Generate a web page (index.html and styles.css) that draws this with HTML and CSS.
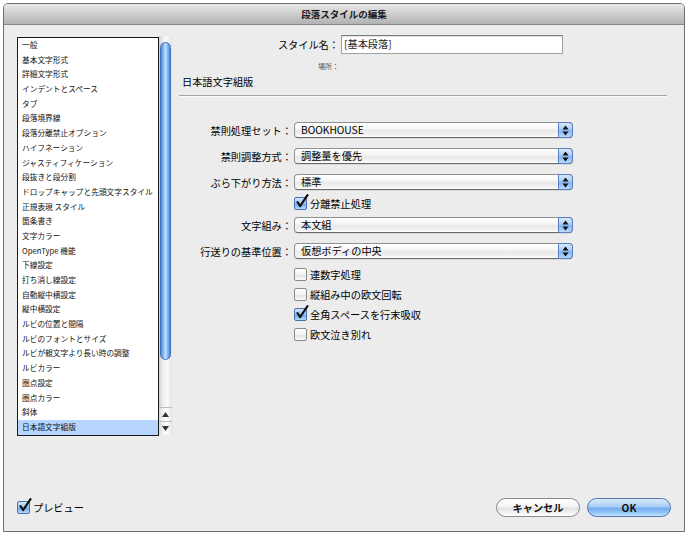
FILE: index.html
```html
<!DOCTYPE html>
<html lang="ja">
<head>
<meta charset="utf-8">
<title>段落スタイルの編集</title>
<link rel="stylesheet" href="styles.css">
</head>
<body>
<div class="window">
  <div class="titlebar">段落スタイルの編集</div>
  <div class="main">
    <div class="sidebar">
      <ul class="list">
        <li>一般</li>
        <li>基本文字形式</li>
        <li>詳細文字形式</li>
        <li>インデントとスペース</li>
        <li>タブ</li>
        <li>段落境界線</li>
        <li>段落分離禁止オプション</li>
        <li>ハイフネーション</li>
        <li>ジャスティフィケーション</li>
        <li>段抜きと段分割</li>
        <li>ドロップキャップと先頭文字スタイル</li>
        <li>正規表現 スタイル</li>
        <li>箇条書き</li>
        <li>文字カラー</li>
        <li>OpenType 機能</li>
        <li>下線設定</li>
        <li>打ち消し線設定</li>
        <li>自動縦中横設定</li>
        <li>縦中横設定</li>
        <li>ルビの位置と間隔</li>
        <li>ルビのフォントとサイズ</li>
        <li>ルビが親文字より長い時の調整</li>
        <li>ルビカラー</li>
        <li>圏点設定</li>
        <li>圏点カラー</li>
        <li>斜体</li>
        <li class="selected">日本語文字組版</li>
      </ul>
      <div class="scrollbar">
        <div class="track"><div class="thumb"></div></div>
        <div class="arrow"><svg width="7" height="5" viewBox="0 0 7 5"><polygon points="3.5,0 7,5 0,5" fill="#333"/></svg></div>
        <div class="arrow"><svg width="7" height="5" viewBox="0 0 7 5"><polygon points="0,0 7,0 3.5,5" fill="#333"/></svg></div>
      </div>
    </div>
    <div class="panel">
      <div class="name-row">
        <span class="name-label">スタイル名：</span>
        <div class="input">[基本段落]</div>
      </div>
      <div class="loc-row">場所：</div>
      <h2 class="heading">日本語文字組版</h2>
      <div class="sep"></div>
      <div class="form">
        <div class="row row-select">
          <span class="label">禁則処理セット：</span>
          <div class="select"><span class="value">BOOKHOUSE</span><span class="stepper"><svg width="7" height="11" viewBox="0 0 7 11"><polygon points="3.5,0.5 6.5,4.5 0.5,4.5" fill="#111"/><polygon points="0.5,6.5 6.5,6.5 3.5,10.5" fill="#111"/></svg></span></div>
        </div>
        <div class="row row-select">
          <span class="label">禁則調整方式：</span>
          <div class="select"><span class="value">調整量を優先</span><span class="stepper"><svg width="7" height="11" viewBox="0 0 7 11"><polygon points="3.5,0.5 6.5,4.5 0.5,4.5" fill="#111"/><polygon points="0.5,6.5 6.5,6.5 3.5,10.5" fill="#111"/></svg></span></div>
        </div>
        <div class="row row-select">
          <span class="label">ぶら下がり方法：</span>
          <div class="select"><span class="value">標準</span><span class="stepper"><svg width="7" height="11" viewBox="0 0 7 11"><polygon points="3.5,0.5 6.5,4.5 0.5,4.5" fill="#111"/><polygon points="0.5,6.5 6.5,6.5 3.5,10.5" fill="#111"/></svg></span></div>
        </div>
        <div class="row row-check">
          <span></span>
          <div class="check"><span class="box checked"><svg class="tick" width="14" height="15" viewBox="0 0 14 15"><path d="M2.5 8.2 L5.2 12 L12.5 1.2" fill="none" stroke="#111" stroke-width="2.2" stroke-linecap="round" stroke-linejoin="round"/></svg></span><span>分離禁止処理</span></div>
        </div>
        <div class="row row-select">
          <span class="label">文字組み：</span>
          <div class="select"><span class="value">本文組</span><span class="stepper"><svg width="7" height="11" viewBox="0 0 7 11"><polygon points="3.5,0.5 6.5,4.5 0.5,4.5" fill="#111"/><polygon points="0.5,6.5 6.5,6.5 3.5,10.5" fill="#111"/></svg></span></div>
        </div>
        <div class="row row-select">
          <span class="label">行送りの基準位置：</span>
          <div class="select"><span class="value">仮想ボディの中央</span><span class="stepper"><svg width="7" height="11" viewBox="0 0 7 11"><polygon points="3.5,0.5 6.5,4.5 0.5,4.5" fill="#111"/><polygon points="0.5,6.5 6.5,6.5 3.5,10.5" fill="#111"/></svg></span></div>
        </div>
        <div class="row row-check spaced">
          <span></span>
          <div class="check"><span class="box"></span><span>連数字処理</span></div>
        </div>
        <div class="row row-check">
          <span></span>
          <div class="check"><span class="box"></span><span>縦組み中の欧文回転</span></div>
        </div>
        <div class="row row-check">
          <span></span>
          <div class="check"><span class="box checked"><svg class="tick" width="14" height="15" viewBox="0 0 14 15"><path d="M2.5 8.2 L5.2 12 L12.5 1.2" fill="none" stroke="#111" stroke-width="2.2" stroke-linecap="round" stroke-linejoin="round"/></svg></span><span>全角スペースを行末吸収</span></div>
        </div>
        <div class="row row-check">
          <span></span>
          <div class="check"><span class="box"></span><span>欧文泣き別れ</span></div>
        </div>
      </div>
    </div>
  </div>
  <div class="footer">
    <div class="check"><span class="box checked"><svg class="tick" width="14" height="15" viewBox="0 0 14 15"><path d="M2.5 8.2 L5.2 12 L12.5 1.2" fill="none" stroke="#111" stroke-width="2.2" stroke-linecap="round" stroke-linejoin="round"/></svg></span><span>プレビュー</span></div>
    <div class="buttons">
      <button class="btn">キャンセル</button>
      <button class="btn primary">OK</button>
    </div>
  </div>
</div>
</body>
</html>
```

FILE: styles.css
```css
* { box-sizing: border-box; }
html, body { margin: 0; padding: 0; }
body {
  background: #fff;
  font-family: "Noto Sans CJK JP", "Noto Sans", sans-serif;
  color: #000;
}
.window {
  margin: 3px 0 0 3px;
  width: 682px;
  height: 529px;
  border: 1px solid #6e6e6e;
  border-radius: 5px 5px 0 0;
  background: #ececec;
  display: flex;
  flex-direction: column;
  overflow: hidden;
}
.titlebar {
  flex: none;
  height: 21px;
  border-bottom: 1px solid #858585;
  background: linear-gradient(#e8e8e8, #cdcdcd 50%, #b2b2b2);
  text-align: center;
  font-size: 9.5px;
  font-weight: bold;
  line-height: 20px;
  color: #1a1a1a;
}
.main {
  flex: 1;
  min-height: 0;
  display: flex;
  padding: 10px 0 0 13px;
}
.sidebar {
  display: flex;
  align-items: flex-start;
  margin-top: 1px;
}
.list {
  width: 142px;
  height: 399px;
  margin: 1px 0 0;
  padding: 0;
  list-style: none;
  border: 1px solid #1a1a1a;
  background: #fff;
  overflow: hidden;
}
.list li {
  height: 14.7px;
  line-height: 14.7px;
  font-size: 7.7px;
  padding-left: 4px;
  white-space: nowrap;
  color: #111;
}
.list li.selected { background: #b5d5ff; }
.scrollbar {
  width: 13px;
  height: 399px;
  display: flex;
  flex-direction: column;
}
.track {
  flex: 1;
  padding: 6px 1px 0;
  background: linear-gradient(to right, #cdcdcd, #ececec 25%, #fafafa 60%, #e4e4e4);
}
.thumb {
  height: 318px;
  border-radius: 6px;
  border: 1px solid #3f70bb;
  background: linear-gradient(to right, #4b86d8, #8dbdf3 30%, #c4e0fd 50%, #8dbdf3 70%, #4b86d8);
}
.arrow {
  height: 14px;
  display: flex;
  align-items: center;
  justify-content: center;
  border-top: 1px solid #bdbdbd;
  background: linear-gradient(to right, #d8d8d8, #f2f2f2 30%, #fdfdfd 60%, #e6e6e6);
}
.panel {
  flex: 1;
  display: flex;
  flex-direction: column;
  padding: 0 17px 0 7px;
}
.name-row {
  display: grid;
  grid-template-columns: 160px 222px;
  column-gap: 2px;
  height: 19px;
  align-items: center;
  font-size: 10.2px;
}
.name-label { text-align: right; white-space: nowrap; }
.input {
  height: 19px;
  border: 1px solid #a0a0a0;
  border-top-color: #7c7c7c;
  background: #fff;
  box-shadow: inset 0 1px 0 #e0e0e0;
  padding-left: 2px;
  line-height: 16px;
  color: #222;
}
.loc-row {
  width: 160px;
  margin-top: 7px;
  height: 10px;
  line-height: 10px;
  text-align: right;
  font-size: 7px;
  color: #555;
}
.heading {
  margin: 4px 0 0 3px;
  height: 14px;
  line-height: 14px;
  font-size: 10.2px;
  font-weight: normal;
}
.sep {
  margin-top: 6px;
  height: 2px;
  border-top: 1px solid #a3a3a3;
  border-bottom: 1px solid #fbfbfb;
}
.form {
  margin-top: 25px;
  display: flex;
  flex-direction: column;
}
.row {
  display: grid;
  grid-template-columns: 113px 279px;
  column-gap: 2px;
  align-items: center;
  font-size: 10.2px;
}
.row-select { height: 16px; }
.row-check { height: 20px; }
.row-select + .row-select { margin-top: 10px; }
.row-select + .row-check { margin-top: 3.5px; }
.row-check + .row-select { margin-top: 3.5px; }
.row-select + .row-check.spaced { margin-top: 5.5px; }
.label { text-align: right; white-space: nowrap; }
.select {
  height: 16px;
  border: 1px solid #909090;
  border-bottom-color: #6a6a6a;
  border-radius: 4px;
  display: flex;
  align-items: center;
  padding-left: 6px;
  background: linear-gradient(#ffffff, #f6f6f6 40%, #e8e8e8 55%, #f2f2f2 85%, #ffffff);
  box-shadow: 0 1px 0 rgba(0, 0, 0, 0.08);
}
.select .value { flex: 1; line-height: 14px; white-space: nowrap; }
.stepper {
  align-self: stretch;
  width: 15px;
  margin: -1px -1px -1px 0;
  border: 1px solid #5a7fc2;
  border-radius: 0 4px 4px 0;
  background: linear-gradient(#d8eafd, #a9cdf7 45%, #82b4f0 55%, #b9dbfd);
  display: flex;
  align-items: center;
  justify-content: center;
}
.check {
  display: flex;
  align-items: center;
  gap: 3px;
  font-size: 10.2px;
  white-space: nowrap;
}
.box {
  position: relative;
  flex: none;
  width: 13px;
  height: 13px;
  border: 1px solid #8a8a8a;
  border-radius: 2px;
  background: linear-gradient(#ffffff, #f3f3f3 50%, #e3e3e3 55%, #fbfbfb);
}
.box.checked {
  border-color: #4d70b0;
  background: linear-gradient(#d2e6fc, #96c2f4 50%, #6ea8ec 55%, #b6dbfd);
}
.tick {
  position: absolute;
  left: 0;
  top: -4px;
}
.footer {
  flex: none;
  height: 33px;
  padding: 0 13px 14px 13px;
  display: flex;
  align-items: center;
}
.footer .check { font-size: 10.2px; }
.buttons {
  margin-left: auto;
  display: flex;
  gap: 7px;
}
.btn {
  width: 84px;
  height: 19px;
  padding: 0;
  border: 1px solid #8a8a8a;
  border-radius: 10px;
  background: linear-gradient(#ffffff, #f4f4f4 45%, #e2e2e2 55%, #f6f6f6 85%, #ffffff);
  font-family: "Noto Sans CJK JP", "Noto Sans", sans-serif;
  font-size: 10.2px;
  font-weight: bold;
  color: #111;
  line-height: 17px;
}
.btn.primary {
  border-color: #5776ad;
  background: linear-gradient(#d9ebfd, #a9cef6 45%, #74abee 55%, #9ccbf8 85%, #c9e6fe);
}
```
